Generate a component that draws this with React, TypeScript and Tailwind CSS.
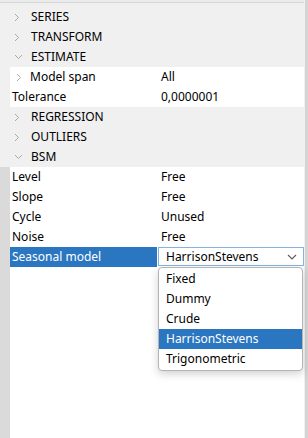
import React from "react";

const font = { fontFamily: '"Noto Sans", "Open Sans", sans-serif' };

function ChevronRight() {
  return (
    <svg width="6" height="9" viewBox="0 0 6 9" className="shrink-0">
      <polyline points="1,1 4.5,4.5 1,8" fill="none" stroke="#a8a8a8" strokeWidth="1" />
    </svg>
  );
}

function ChevronDown() {
  return (
    <svg width="9" height="6" viewBox="0 0 9 6" className="shrink-0">
      <polyline points="1,1 4.5,4.5 8,1" fill="none" stroke="#a8a8a8" strokeWidth="1" />
    </svg>
  );
}

function Category({ label, open }: { label: string; open?: boolean }) {
  return (
    <div className="flex h-5 items-center bg-[#f0f0f0]">
      <div className="flex w-[31px] items-center pl-[14px]">{open ? <ChevronDown /> : <ChevronRight />}</div>
      <span>{label}</span>
    </div>
  );
}

function Prop({
  label,
  value,
  sub,
  dark,
}: {
  label: string;
  value: string;
  sub?: boolean;
  dark?: boolean;
}) {
  return (
    <div className="flex h-5 items-center">
      <div className={`h-full w-[10px] ${dark ? "bg-[#dadada]" : "bg-[#f0f0f0]"}`} />
      <div className="flex h-full w-[147px] items-center bg-white pl-[2px]">
        {sub && (
          <div className="flex w-[18px] items-center pl-[4px]">
            <ChevronRight />
          </div>
        )}
        <span>{label}</span>
      </div>
      <div className="flex h-full flex-1 items-center bg-white pl-[4px]">{value}</div>
    </div>
  );
}

const options = ["Fixed", "Dummy", "Crude", "HarrisonStevens", "Trigonometric"];

export default function App() {
  return (
    <div className="flex h-[438px] w-[308px] bg-white text-[12px] text-black" style={font}>
      <div className="flex w-[304px] flex-col">
        <div className="h-[2px] bg-[#ebebeb]" />
        <div className="h-px bg-[#d6d6d6]" />
        <div className="h-[4px] bg-[#f0f0f0]" />
        <Category label="SERIES" />
        <Category label="TRANSFORM" />
        <Category label="ESTIMATE" open />
        <Prop label="Model span" value="All" sub />
        <Prop label="Tolerance" value="0,0000001" />
        <Category label="REGRESSION" />
        <Category label="OUTLIERS" />
        <Category label="BSM" open />
        <Prop label="Level" value="Free" dark />
        <Prop label="Slope" value="Free" dark />
        <Prop label="Cycle" value="Unused" dark />
        <Prop label="Noise" value="Free" dark />
        <div className="relative flex h-5 items-center">
          <div className="h-full w-[10px] bg-[#dadada]" />
          <div className="flex h-full w-[147px] items-center bg-[#2b76c0] pl-[2px] text-white">Seasonal model</div>
          <div className="h-full w-px bg-white" />
          <div className="flex h-[19px] flex-1 items-center justify-between self-start border border-[#86b3e0] bg-white pl-[7px] pr-[6px]">
            <span>HarrisonStevens</span>
            <svg width="10" height="6" viewBox="0 0 10 6">
              <polyline points="1,1 5,5 9,1" fill="none" stroke="#606060" strokeWidth="1.2" />
            </svg>
          </div>
          <div className="absolute left-[158px] top-[20px] z-10 w-[145px] rounded-[4px] border border-[#b4b4b4] bg-white py-px shadow-[0_3px_8px_rgba(0,0,0,0.18)]">
            {options.map((o) => (
              <div
                key={o}
                className={`flex h-5 items-center pl-[7px] ${o === "HarrisonStevens" ? "bg-[#2b76c0] text-white" : ""}`}
              >
                {o}
              </div>
            ))}
          </div>
        </div>
        <div className="flex flex-1">
          <div className="w-[10px] bg-[#dadada]" />
          <div className="flex-1 bg-white" />
        </div>
      </div>
      <div className="w-px bg-[#f0f0f0]" />
      <div className="w-[3px] bg-[#d4d4d4]" />
    </div>
  );
}
